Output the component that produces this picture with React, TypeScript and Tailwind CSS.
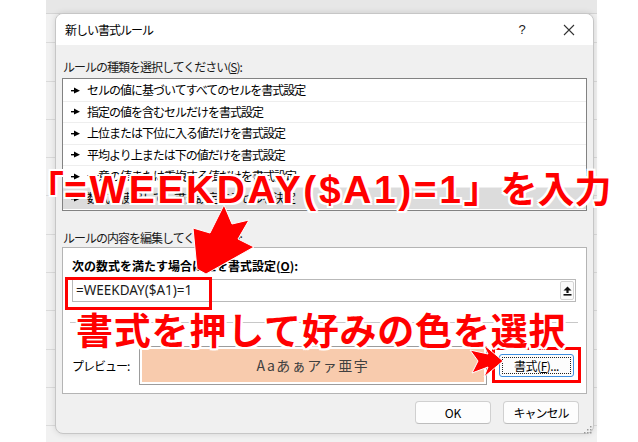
import React from 'react';

const jp = "font-['Noto_Sans_CJK_JP',sans-serif]";

const rules = [
  'セルの値に基づいてすべてのセルを書式設定',
  '指定の値を含むセルだけを書式設定',
  '上位または下位に入る値だけを書式設定',
  '平均より上または下の値だけを書式設定',
  '一意の値または重複する値だけを書式設定',
  '数式を使用して、書式設定するセルを決定',
];

const outline =
  '[text-shadow:2px_0_0_#fff,-2px_0_0_#fff,0_2px_0_#fff,0_-2px_0_#fff,2px_2px_0_#fff,-2px_-2px_0_#fff,2px_-2px_0_#fff,-2px_2px_0_#fff]';

const RowArrow: React.FC = () => (
  <svg width="9" height="7" viewBox="0 0 9 7" className="shrink-0">
    <rect x="0" y="3" width="4" height="1.4" fill="#000" />
    <polygon points="3,0.5 9,3.7 3,6.5" fill="#000" />
  </svg>
);

const App: React.FC = () => {
  return (
    <div className={`relative w-[638px] h-[442px] overflow-hidden bg-white flex ${jp} text-black`}>
      <div className="w-[46px] shrink-0 bg-white" />

      {/* sheet behind the dialog */}
      <div className="w-[551px] shrink-0 flex flex-col bg-[#f1f1f1] bg-[repeating-linear-gradient(to_bottom,transparent_0px,transparent_37.3px,#dadada_37.3px,#dadada_38.3px)] bg-[position:0_5px]">
        <div className="h-[14px] shrink-0 bg-[#e7e7e7] border-b border-[#d4d4d4]" />

        {/* dialog */}
        <div className="ml-[9px] w-[539px] h-[421px] -mt-px flex flex-col rounded-[8px] border border-[#c6c6c6] bg-[#f0f0f0] overflow-hidden shadow-[0_0_6px_rgba(0,0,0,0.12)]">
          {/* title bar */}
          <div className="h-[31px] shrink-0 bg-white flex items-center pl-[9px]">
            <span className="text-[12px] tracking-[-1px] flex-1">新しい書式ルール</span>
            <div className="w-[46px] flex justify-center text-[13px] text-[#222] font-['Liberation_Sans',sans-serif]">?</div>
            <div className="w-[48px] flex justify-center">
              <svg width="12" height="12" viewBox="0 0 12 12">
                <path d="M1 1 L11 11 M11 1 L1 11" stroke="#333" strokeWidth="1.1" />
              </svg>
            </div>
          </div>

          {/* body */}
          <div className="flex-1 flex flex-col px-[6px] pt-[14px] pb-[9px]">
            <div className="h-[16px] pl-[1px] text-[12px] tracking-[-1px] leading-[16px] text-[#1a1a1a]">
              ルールの種類を選択してください(<span className="underline">S</span>):
            </div>

            <div className="mt-[3px] h-[133px] border border-[#828282] bg-white flex flex-col py-px">
              {rules.map((r, i) => (
                <div
                  key={r}
                  className={`h-[21.5px] flex items-center gap-[7px] pl-[8px] text-[12px] tracking-[-1px] ${
                    i === 5 ? 'bg-[#dcdcdc]' : 'border-b border-[#eeeeee]'
                  }`}
                >
                  <RowArrow />
                  <span>{r}</span>
                </div>
              ))}
            </div>

            <div className="mt-[19px] h-[16px] pl-[1px] text-[12px] tracking-[-1px] leading-[16px] text-[#1a1a1a]">
              ルールの内容を編集してください(<span className="underline">E</span>):
            </div>

            <div className="mt-px h-[147px] border border-[#b4b4b4] bg-white flex flex-col pl-[9px] pr-[10px] pt-[10px]">
              <div className="h-[16px] leading-[16px] text-[12px] font-bold">
                次の数式を満たす場合に値を書式設定(<span className="underline">O</span>):
              </div>
              <div className="mt-[5px] h-[23px] border border-[#b9b9b9] bg-white flex items-center pl-[3px] pr-px">
                <span className="flex-1 text-[13.5px] text-[#1a1a1a] font-['Noto_Sans',sans-serif]">=WEEKDAY($A1)=1</span>
                <div className="w-[14px] h-[19px] border border-[#d4d4d4] rounded-[2px] bg-[#fbfbfb] flex items-center justify-center">
                  <svg width="9" height="10" viewBox="0 0 9 10">
                    <polygon points="4.5,0.5 8.5,4.5 5.6,4.5 5.6,7 3.4,7 3.4,4.5 0.5,4.5" fill="#111" />
                    <rect x="0.5" y="8" width="8" height="1.6" fill="#111" />
                  </svg>
                </div>
              </div>
              <div className="mt-[20px] mx-[-2px] h-px bg-[#c8c8c8]" />
              <div className="mt-[23px] h-[39px] flex items-center">
                <span className="w-[67px] text-[12px] tracking-[-1px]">プレビュー:</span>
                <div className="w-[348px] h-[39px] border border-[#9c9c9c] p-[2px] bg-white">
                  <div className="w-full h-full bg-[#f8cbad] flex items-center justify-center text-[14px] tracking-[1.5px] text-[#404040]">
                    Aaあぁアァ亜宇
                  </div>
                </div>
                <div className="ml-[12px] w-[75px] h-[23px] rounded-[3px] border border-[#3d8ee0] bg-[#fdfdfd] p-[2px]">
                  <div className="w-full h-full border border-dotted border-[#222] flex items-center justify-center text-[12px] tracking-[-0.5px]">
                    書式(<span className="underline">F</span>)...
                  </div>
                </div>
              </div>
            </div>

            <div className="mt-[7px] h-[23px] flex justify-end gap-[12px] pr-[8px]">
              <div className="w-[76px] rounded-[4px] border border-[#d0d0d0] border-b-[#bdbdbd] bg-[#fdfdfd] flex items-center justify-center text-[12px]">
                OK
              </div>
              <div className="w-[76px] rounded-[4px] border border-[#d0d0d0] border-b-[#bdbdbd] bg-[#fdfdfd] flex items-center justify-center text-[12px] tracking-[-1px]">
                キャンセル
              </div>
            </div>
          </div>
        </div>
      </div>

      {/* resize grip */}
      <svg className="absolute left-[584px] top-[426px]" width="8" height="8" viewBox="0 0 8 8">
        {[
          [6, 0], [6, 3], [3, 3], [6, 6], [3, 6], [0, 6],
        ].map(([x, y]) => (
          <rect key={`${x}-${y}`} x={x} y={y} width="1.5" height="1.5" fill="#9a9a9a" />
        ))}
      </svg>

      {/* annotations */}
      <div className="absolute left-[65px] top-[277px] w-[147px] h-[33px] border-[3px] border-[#ff0000]" />
      <div className="absolute left-[492px] top-[347px] w-[89px] h-[36px] border-[3px] border-[#ff0000]" />

      <svg className="absolute left-0 top-0" width="638" height="442" viewBox="0 0 638 442">
        <polygon
          points="224,205 232,224 249,220 238,239 254,247 206,274 197,269 193,228 210,233"
          fill="#ff0000"
          stroke="#fff"
          strokeWidth="1"
        />
        <polygon
          points="503,361 484,377 488,367 472,373 478,361 470,350 488,354 483,344"
          fill="#ff0000"
          stroke="#fff"
          strokeWidth="1"
        />
      </svg>

      <div className={`absolute left-[27px] top-[169px] h-[40px] flex items-baseline whitespace-nowrap text-[37px] leading-none font-bold text-[#ff0000] ${outline}`}>
        <span>「</span>
        <span className="font-['Liberation_Sans',sans-serif] text-[39px] tracking-[2.6px]">=WEEKDAY($A1)=1</span>
        <span>」を入力</span>
      </div>
      <div className={`absolute left-[76px] top-[311px] whitespace-nowrap text-[37px] tracking-[0.8px] leading-none font-bold text-[#ff0000] ${outline}`}>
        書式を押して好みの色を選択
      </div>
    </div>
  );
};

export default App;
